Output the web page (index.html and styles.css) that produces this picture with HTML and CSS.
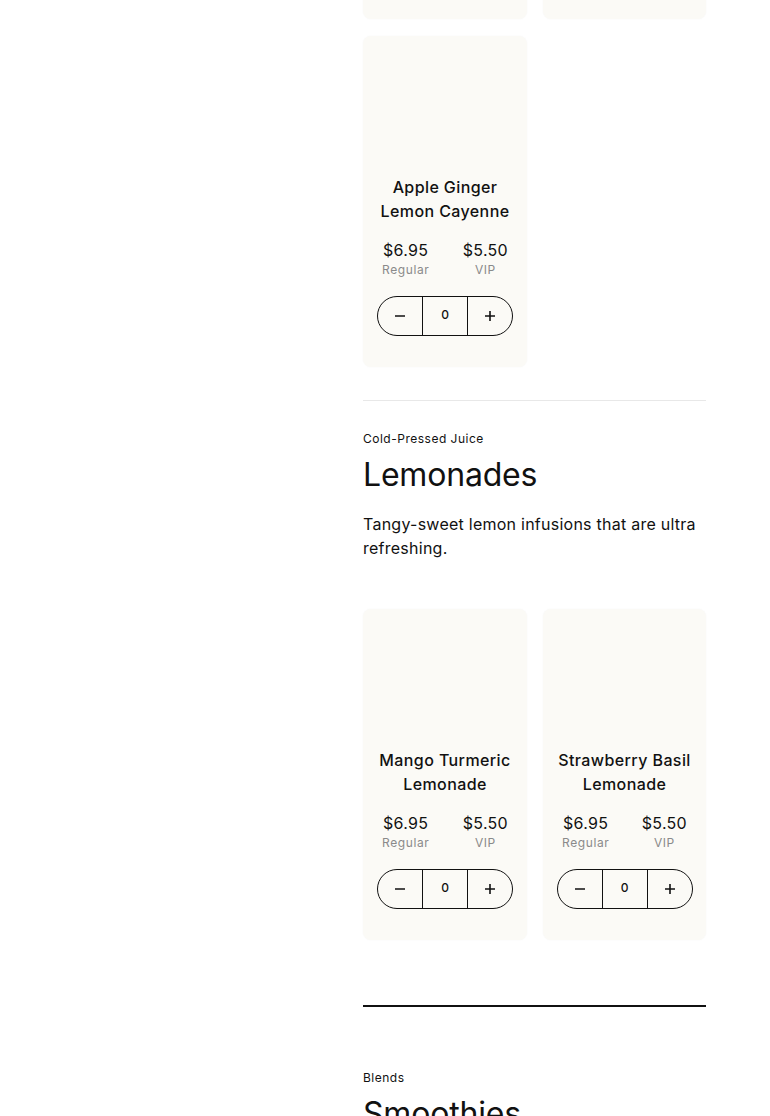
FILE: index.html
```html
<!DOCTYPE html>
<html>
<head>
<meta charset="utf-8">
<link rel="stylesheet" href="styles.css">
</head>
<body>
<div class="page">
  <aside class="sidebar"></aside>
  <main class="content">
    <div class="grid grid-top">
      <div class="card card-stub"></div>
      <div class="card card-stub"></div>
      <div class="card">
        <div class="card-img"></div>
        <h3 class="card-title">Apple Ginger Lemon Cayenne</h3>
        <div class="prices">
          <div class="price"><span class="amount">$6.95</span><span class="label">Regular</span></div>
          <div class="price"><span class="amount">$5.50</span><span class="label">VIP</span></div>
        </div>
        <div class="qty">
          <button class="qty-btn"><svg width="12" height="12" viewBox="0 0 12 12"><path d="M1 6h10" stroke="#111" stroke-width="1.6"/></svg></button>
          <span class="qty-val">0</span>
          <button class="qty-btn"><svg width="12" height="12" viewBox="0 0 12 12"><path d="M1 6h10M6 1v10" stroke="#111" stroke-width="1.6"/></svg></button>
        </div>
      </div>
    </div>

    <hr class="divider">

    <section class="section">
      <div class="eyebrow">Cold-Pressed Juice</div>
      <h2 class="section-title">Lemonades</h2>
      <p class="section-desc">Tangy-sweet lemon infusions that are ultra refreshing.</p>
      <div class="grid">
        <div class="card">
          <div class="card-img"></div>
          <h3 class="card-title">Mango Turmeric Lemonade</h3>
          <div class="prices">
            <div class="price"><span class="amount">$6.95</span><span class="label">Regular</span></div>
            <div class="price"><span class="amount">$5.50</span><span class="label">VIP</span></div>
          </div>
          <div class="qty">
            <button class="qty-btn"><svg width="12" height="12" viewBox="0 0 12 12"><path d="M1 6h10" stroke="#111" stroke-width="1.6"/></svg></button>
            <span class="qty-val">0</span>
            <button class="qty-btn"><svg width="12" height="12" viewBox="0 0 12 12"><path d="M1 6h10M6 1v10" stroke="#111" stroke-width="1.6"/></svg></button>
          </div>
        </div>
        <div class="card">
          <div class="card-img"></div>
          <h3 class="card-title">Strawberry Basil Lemonade</h3>
          <div class="prices">
            <div class="price"><span class="amount">$6.95</span><span class="label">Regular</span></div>
            <div class="price"><span class="amount">$5.50</span><span class="label">VIP</span></div>
          </div>
          <div class="qty">
            <button class="qty-btn"><svg width="12" height="12" viewBox="0 0 12 12"><path d="M1 6h10" stroke="#111" stroke-width="1.6"/></svg></button>
            <span class="qty-val">0</span>
            <button class="qty-btn"><svg width="12" height="12" viewBox="0 0 12 12"><path d="M1 6h10M6 1v10" stroke="#111" stroke-width="1.6"/></svg></button>
          </div>
        </div>
      </div>
    </section>

    <hr class="divider-thick">

    <section class="section section-next">
      <div class="eyebrow">Blends</div>
      <h2 class="section-title">Smoothies</h2>
    </section>
  </main>
</div>
</body>
</html>
```
FILE: styles.css
```css
* { box-sizing: border-box; }
html, body { margin: 0; padding: 0; background: #fff; }
body {
  font-family: "Inter", "Liberation Sans", sans-serif;
  color: #111;
  overflow: hidden;
  height: 1116px;
}
.page {
  display: grid;
  grid-template-columns: 363px 343px;
}
.content {
  margin-top: -312px;
}
.grid {
  display: grid;
  grid-template-columns: 164px 163px;
  column-gap: 16px;
  row-gap: 17px;
}
.card {
  background: #fbfaf6;
  border-radius: 8px;
  box-shadow: 0 0 2px rgba(0,0,0,0.04);
  display: flex;
  flex-direction: column;
  align-items: center;
  padding: 0 14px 31px;
}
.card-stub { height: 331px; }
.card-img { height: 139px; width: 100%; }
.card-title {
  margin: 0;
  font-size: 16px;
  line-height: 24px;
  font-weight: 500;
  letter-spacing: 0.4px;
  text-align: center;
}
.prices {
  margin-top: 16px;
  width: 100%;
  display: flex;
  justify-content: space-between;
  padding: 0 5px;
}
.price {
  display: flex;
  flex-direction: column;
  align-items: center;
}
.amount {
  font-size: 16px;
  line-height: 22px;
  letter-spacing: 0.3px;
}
.label {
  font-size: 12px;
  line-height: 16px;
  color: #8a8a8a;
  letter-spacing: 0.6px;
  margin-top: 1px;
}
.qty {
  margin-top: 18px;
  display: flex;
  height: 40px;
  width: 136px;
  border: 1px solid #111;
  border-radius: 20px;
  overflow: hidden;
}
.qty-btn {
  flex: 0 0 44px;
  background: transparent;
  border: 0;
  padding: 0;
  display: flex;
  align-items: center;
  justify-content: center;
}
.qty-val {
  flex: 1;
  border-left: 1px solid #111;
  border-right: 1px solid #111;
  display: flex;
  align-items: center;
  justify-content: center;
  font-size: 12px;
  font-weight: 500;
  padding-bottom: 3px;
}
.divider {
  margin: 33px 0 0;
  border: 0;
  border-top: 1px solid #e8e8e8;
}
.section { padding-top: 30px; }
.eyebrow {
  font-size: 12px;
  line-height: 16px;
  letter-spacing: 0.5px;
}
.section-title {
  margin: 8px 0 0;
  font-size: 32px;
  line-height: 40px;
  font-weight: 400;
  letter-spacing: -0.2px;
}
.section-desc {
  margin: 17px 0 49px;
  font-size: 16px;
  line-height: 24px;
  letter-spacing: 0.25px;
}
.divider-thick {
  margin: 65px 0 0;
  border: 0;
  border-top: 2px solid #111;
}
.section-next { padding-top: 63px; }
```
